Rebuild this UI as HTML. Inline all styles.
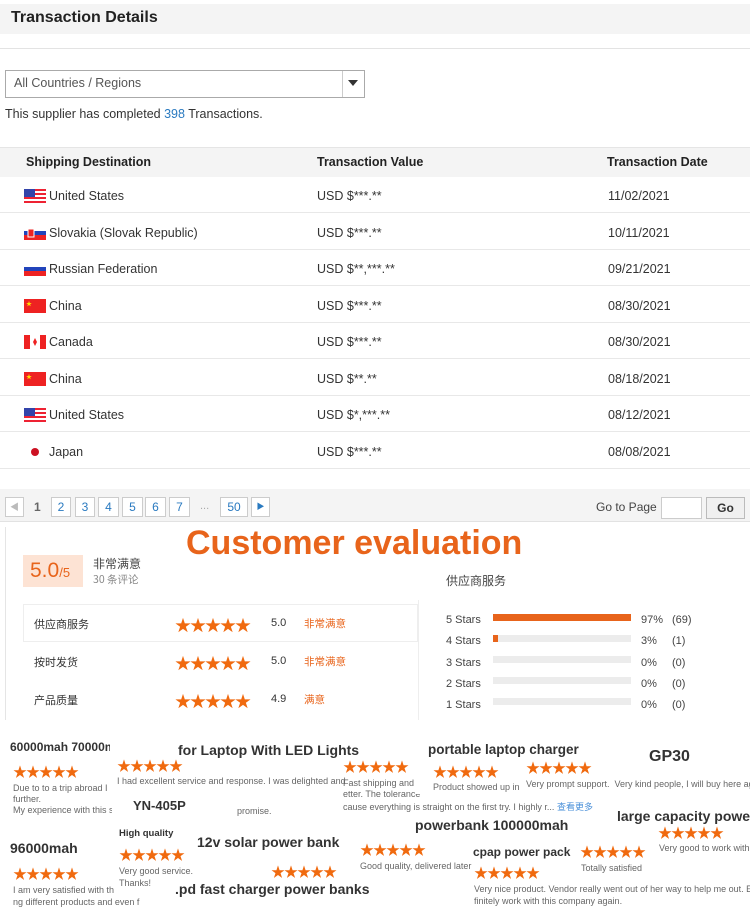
<!DOCTYPE html>
<html><head><meta charset="utf-8"><style>
*{margin:0;padding:0;box-sizing:border-box}
body{width:750px;height:903px;overflow:hidden;background:#fff;font-family:"Liberation Sans","Noto Sans CJK SC",sans-serif;color:#333;position:relative}
.a{position:absolute;white-space:nowrap}
.row{position:absolute;left:0;width:750px;height:36px;border-bottom:1px solid #e8e8e8;font-size:12.5px}
.row span{position:absolute;top:12px}
.flag{position:absolute;left:24px;top:12px;width:22px;height:14px}
.pg{position:absolute;top:497px;height:20px;border:1px solid #ccc;background:#fff;color:#2a7ac0;font-size:12px;text-align:center;line-height:18px}
.st{color:#f06a0f;letter-spacing:-1px}
.cn{font-family:"Noto Sans CJK SC",sans-serif}
.bar{position:absolute;left:493px;width:138px;height:7px;background:#ececec}
.h{font-weight:bold;color:#222}
.sm{font-size:9px;color:#666}
.o{color:#e8641b}
</style></head><body>
<div class="a" style="left:0;top:4px;width:750px;height:30px;background:#f4f4f4"></div>
<div class="a" style="left:11px;top:9px;font-size:16px;font-weight:bold;color:#222">Transaction Details</div>
<div class="a" style="left:0;top:48px;width:750px;height:1px;background:#e3e3e3"></div>
<div class="a" style="left:5px;top:70px;width:360px;height:28px;border:1px solid #aaa"></div>
<div class="a" style="left:342px;top:71px;width:1px;height:26px;background:#ccc"></div>
<div class="a" style="left:348px;top:80px;width:0;height:0;border-left:5px solid transparent;border-right:5px solid transparent;border-top:6px solid #333"></div>
<div class="a" style="left:14px;top:76px;font-size:12.5px;color:#555">All Countries / Regions</div>
<div class="a" style="left:5px;top:107px;font-size:12.5px">This supplier has completed <span style="color:#2a7ac0">398</span> Transactions.</div>
<div class="a" style="left:0;top:147px;width:750px;height:30px;background:#f4f4f4;border-top:1px solid #e5e5e5"></div>
<div class="a h" style="left:26px;top:155px;font-size:12.5px">Shipping Destination</div>
<div class="a h" style="left:317px;top:155px;font-size:12.5px">Transaction Value</div>
<div class="a h" style="left:607px;top:155px;font-size:12.5px">Transaction Date</div>

<div class="row" style="top:177px"><svg class="flag" viewBox="0 0 22 14"><rect width="22" height="14" fill="#fff"/><g fill="#e23"><rect y="0" width="22" height="2"/><rect y="4" width="22" height="2"/><rect y="8" width="22" height="2"/><rect y="12" width="22" height="2"/></g><rect width="11" height="8" fill="#34a"/></svg><span style="left:49px">United States</span><span style="left:317px">USD $***.**</span><span style="left:608px">11/02/2021</span></div>
<div class="row" style="top:214px"><svg class="flag" viewBox="0 0 22 14"><rect width="22" height="5" fill="#fff"/><rect y="5" width="22" height="4" fill="#24b"/><rect y="9" width="22" height="5" fill="#e22"/><rect x="4" y="3" width="6" height="8" fill="#e22" stroke="#fff"/></svg><span style="left:49px">Slovakia (Slovak Republic)</span><span style="left:317px">USD $***.**</span><span style="left:608px">10/11/2021</span></div>
<div class="row" style="top:250px"><svg class="flag" viewBox="0 0 22 14"><rect width="22" height="5" fill="#fff"/><rect y="5" width="22" height="4" fill="#24b"/><rect y="9" width="22" height="5" fill="#e22"/></svg><span style="left:49px">Russian Federation</span><span style="left:317px">USD $**,***.**</span><span style="left:608px">09/21/2021</span></div>
<div class="row" style="top:287px"><svg class="flag" viewBox="0 0 22 14"><rect width="22" height="14" fill="#e22"/><text x="2" y="7" font-size="6" fill="#fd0">★</text></svg><span style="left:49px">China</span><span style="left:317px">USD $***.**</span><span style="left:608px">08/30/2021</span></div>
<div class="row" style="top:323px"><svg class="flag" viewBox="0 0 22 14"><rect width="22" height="14" fill="#fff"/><rect width="6" height="14" fill="#e22"/><rect x="16" width="6" height="14" fill="#e22"/><path d="M11 3l2 4-2 4-2-4z" fill="#e22"/></svg><span style="left:49px">Canada</span><span style="left:317px">USD $***.**</span><span style="left:608px">08/30/2021</span></div>
<div class="row" style="top:360px"><svg class="flag" viewBox="0 0 22 14"><rect width="22" height="14" fill="#e22"/><text x="2" y="7" font-size="6" fill="#fd0">★</text></svg><span style="left:49px">China</span><span style="left:317px">USD $**.**</span><span style="left:608px">08/18/2021</span></div>
<div class="row" style="top:396px"><svg class="flag" viewBox="0 0 22 14"><rect width="22" height="14" fill="#fff"/><g fill="#e23"><rect y="0" width="22" height="2"/><rect y="4" width="22" height="2"/><rect y="8" width="22" height="2"/><rect y="12" width="22" height="2"/></g><rect width="11" height="8" fill="#34a"/></svg><span style="left:49px">United States</span><span style="left:317px">USD $*,***.**</span><span style="left:608px">08/12/2021</span></div>
<div class="row" style="top:433px"><svg class="flag" viewBox="0 0 22 14"><rect width="22" height="14" fill="#fff"/><circle cx="11" cy="7" r="4" fill="#c12"/></svg><span style="left:49px">Japan</span><span style="left:317px">USD $***.**</span><span style="left:608px">08/08/2021</span></div>

<div class="a" style="left:0;top:489px;width:750px;height:33px;background:#f4f4f4;border-bottom:1px solid #e2e2e2"></div>
<div class="pg" style="left:5px;width:19px;color:#bbb;font-size:9px">◀</div>
<div class="a" style="left:34px;top:500px;font-size:12px;color:#666;font-weight:bold">1</div>
<div class="pg" style="left:51px;width:20px">2</div>
<div class="pg" style="left:75px;width:20px">3</div>
<div class="pg" style="left:98px;width:21px">4</div>
<div class="pg" style="left:122px;width:21px">5</div>
<div class="pg" style="left:145px;width:21px">6</div>
<div class="pg" style="left:169px;width:21px">7</div>
<div class="a" style="left:200px;top:500px;font-size:11px;color:#aaa">...</div>
<div class="pg" style="left:220px;width:28px">50</div>
<div class="pg" style="left:251px;width:19px;font-size:8px">▶</div>
<div class="a" style="left:596px;top:500px;font-size:12px;color:#444">Go to Page</div>
<div class="a" style="left:661px;top:497px;width:41px;height:22px;border:1px solid #ccc;background:#fff"></div>
<div class="a" style="left:706px;top:497px;width:39px;height:22px;border:1px solid #bbb;background:#f0f0f0;font-size:12px;font-weight:bold;text-align:center;line-height:20px">Go</div>

<div class="a" style="left:5px;top:527px;width:1px;height:193px;background:#e5e5e5"></div>
<div class="a" style="left:186px;top:524px;font-size:34px;font-weight:bold;color:#e8641b">Customer evaluation</div>
<div class="a" style="left:23px;top:555px;width:60px;height:32px;background:#fde3d4"></div>
<div class="a" style="left:30px;top:559px;font-size:21px;color:#e8641b">5.0<span style="font-size:13px">/5</span></div>
<div class="a cn" style="left:93px;top:555px;font-size:12px;color:#444">非常满意</div>
<div class="a cn" style="left:93px;top:572px;font-size:10.5px;color:#888">30 条评论</div>
<div class="a" style="left:23px;top:604px;width:395px;height:1px;background:#eee"></div>
<div class="a" style="left:23px;top:604px;width:395px;height:38px;border:1px solid #eee"></div>
<div class="a" style="left:418px;top:600px;width:1px;height:120px;background:#eee"></div>
<div class="a cn" style="left:34px;top:616px;font-size:11px">供应商服务</div>
<div class="a cn" style="left:34px;top:654px;font-size:11px">按时发货</div>
<div class="a cn" style="left:34px;top:692px;font-size:11px">产品质量</div>
<div class="a st" style="left:175px;top:612px;font-size:16px">★★★★★</div>
<div class="a st" style="left:175px;top:650px;font-size:16px">★★★★★</div>
<div class="a st" style="left:175px;top:688px;font-size:16px">★★★★★</div>
<div class="a" style="left:271px;top:617px;font-size:11px">5.0</div>
<div class="a" style="left:271px;top:655px;font-size:11px">5.0</div>
<div class="a" style="left:271px;top:693px;font-size:11px">4.9</div>
<div class="a cn o" style="left:304px;top:616px;font-size:10.5px">非常满意</div>
<div class="a cn o" style="left:304px;top:654px;font-size:10.5px">非常满意</div>
<div class="a cn o" style="left:304px;top:692px;font-size:10.5px">满意</div>
<div class="a cn" style="left:446px;top:572px;font-size:12px;color:#444">供应商服务</div>
<div class="a" style="left:446px;top:610px;font-size:11px;color:#444;line-height:21.3px">5 Stars<br>4 Stars<br>3 Stars<br>2 Stars<br>1 Stars</div>
<div class="bar" style="top:614px;background:#e8641b"></div>
<div class="bar" style="top:635px"></div><div class="a" style="left:493px;top:635px;width:5px;height:7px;background:#e8641b"></div>
<div class="bar" style="top:656px"></div><div class="bar" style="top:677px"></div><div class="bar" style="top:698px"></div>
<div class="a" style="left:641px;top:610px;font-size:11px;color:#444;line-height:21.3px">97%<br>3%<br>0%<br>0%<br>0%</div>
<div class="a" style="left:672px;top:610px;font-size:11px;color:#444;line-height:21.3px">(69)<br>(1)<br>(0)<br>(0)<br>(0)</div>

<div class="a" style="left:10px;top:740px;font-size:12px;font-weight:bold">60000mah 70000mah</div>
<div class="a st" style="left:13px;top:762px;font-size:14px">★★★★★</div>
<div class="a sm" style="left:13px;top:783px;line-height:11px">Due to to a trip abroad I h<br>further.<br>My experience with this s</div>
<div class="a" style="left:110px;top:735px;width:305px;height:60px;background:#fff"></div>
<div class="a" style="left:178px;top:742px;font-size:14px;font-weight:bold">for Laptop With LED Lights</div>
<div class="a st" style="left:117px;top:756px;font-size:14px">★★★★★</div>
<div class="a sm" style="left:117px;top:776px">I had excellent service and response. I was delighted and</div>
<div class="a" style="left:112px;top:795px;width:125px;height:22px;background:#fff"></div>
<div class="a" style="left:133px;top:798px;font-size:13px;font-weight:bold">YN-405P</div>
<div class="a sm" style="left:237px;top:806px">promise.</div>
<div class="a st" style="left:343px;top:757px;font-size:14px">★★★★★</div>
<div class="a sm" style="left:343px;top:778px;line-height:11px">Fast shipping and<br>etter. The tolerance</div>
<div class="a sm" style="left:343px;top:800px">cause everything is straight on the first try. I highly r... <span style="color:#4a90d9">查看更多</span></div>
<div class="a" style="left:415px;top:732px;width:335px;height:62px;background:#fff"></div>
<div class="a" style="left:428px;top:742px;font-size:13.5px;font-weight:bold">portable laptop charger</div>
<div class="a st" style="left:433px;top:762px;font-size:14px">★★★★★</div>
<div class="a st" style="left:526px;top:758px;font-size:14px">★★★★★</div>
<div class="a sm" style="left:433px;top:782px">Product showed up in</div>
<div class="a sm" style="left:526px;top:779px">Very prompt support.&nbsp; Very kind people, I will buy here again</div>
<div class="a" style="left:649px;top:748px;font-size:16px;font-weight:bold">GP30</div>
<div class="a" style="left:617px;top:808px;font-size:14px;font-weight:bold">large capacity powe</div>
<div class="a st" style="left:658px;top:823px;font-size:14px">★★★★★</div>
<div class="a sm" style="left:659px;top:843px">Very good to work with</div>
<div class="a" style="left:415px;top:817px;font-size:14px;font-weight:bold">powerbank 100000mah</div>
<div class="a" style="left:10px;top:840px;font-size:14px;font-weight:bold">96000mah</div>
<div class="a st" style="left:13px;top:864px;font-size:14px">★★★★★</div>
<div class="a sm" style="left:13px;top:884px;line-height:12px">I am very satisfied with th<br>ng different products and even f</div>
<div class="a" style="left:119px;top:828px;font-size:9.5px;font-weight:bold">High quality</div>
<div class="a st" style="left:119px;top:845px;font-size:14px">★★★★★</div>
<div class="a sm" style="left:119px;top:865px;line-height:12px">Very good service.<br>Thanks!</div>
<div class="a" style="left:197px;top:834px;font-size:14px;font-weight:bold">12v solar power bank</div>
<div class="a st" style="left:271px;top:862px;font-size:14px">★★★★★</div>
<div class="a st" style="left:360px;top:840px;font-size:14px">★★★★★</div>
<div class="a sm" style="left:360px;top:861px">Good quality, delivered later</div>
<div class="a" style="left:175px;top:881px;font-size:14px;font-weight:bold">.pd fast charger power banks</div>
<div class="a" style="left:473px;top:845px;font-size:12px;font-weight:bold">cpap power pack</div>
<div class="a st" style="left:580px;top:842px;font-size:14px">★★★★★</div>
<div class="a st" style="left:474px;top:863px;font-size:14px">★★★★★</div>
<div class="a sm" style="left:581px;top:863px">Totally satisfied</div>
<div class="a sm" style="left:474px;top:883px;line-height:12px">Very nice product. Vendor really went out of her way to help me out. Even<br>finitely work with this company again.</div>
</body></html>
